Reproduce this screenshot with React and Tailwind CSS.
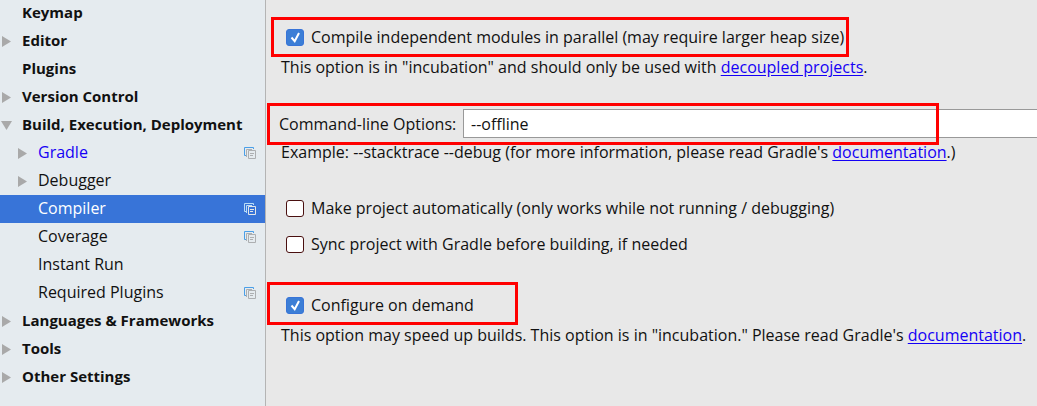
import { useState } from 'react';

const TREE = [
  { label: 'Keymap' },
  { label: 'Editor', arrow: 'closed' },
  { label: 'Plugins' },
  { label: 'Version Control', arrow: 'closed' },
  { label: 'Build, Execution, Deployment', arrow: 'open' },
  { label: 'Gradle', child: true, arrow: 'closed', project: true, modified: true },
  { label: 'Debugger', child: true, arrow: 'closed' },
  { label: 'Compiler', child: true, project: true },
  { label: 'Coverage', child: true, project: true },
  { label: 'Instant Run', child: true },
  { label: 'Required Plugins', child: true, project: true },
  { label: 'Languages & Frameworks', arrow: 'closed' },
  { label: 'Tools', arrow: 'closed' },
  { label: 'Other Settings', arrow: 'closed' },
];

function Arrow({ state }) {
  return (
    <svg viewBox="0 0 11 11" className="size-[11px] shrink-0 fill-[#a9a9a9]" aria-hidden="true">
      {state === 'open' && <path d="M0 1h11L5.5 10z" />}
      {state === 'closed' && <path d="M1 0v11L10 5.5z" />}
    </svg>
  );
}

function ProjectIcon({ selected }) {
  return (
    <svg viewBox="0 0 12 12" className="size-3 shrink-0" fill="none" aria-hidden="true">
      <path d="M9.5 2V.5h-9v8H2" stroke={selected ? '#b9dcf7' : '#4a9fe8'} />
      <path d="M2.5 10V2.5H8" stroke={selected ? '#b9dcf7' : '#adafb1'} />
      <path d="M4.5 3.5h7v8h-7z" stroke={selected ? '#e4e6e8' : '#adafb1'} />
      <path d="M6 6.5h4M6 8.5h3" stroke={selected ? '#e4e6e8' : '#adafb1'} />
    </svg>
  );
}

function TreeItem({ item, selected, onSelect }) {
  const color = selected ? 'bg-[#3874d8] text-white' : item.modified ? 'text-[#1400f5]' : 'text-[#111]';
  return (
    <li>
      <button
        type="button"
        onClick={onSelect}
        aria-current={selected ? 'page' : undefined}
        className={`flex h-7 w-full items-center gap-[10px] pr-[9px] text-left ${item.child ? 'pl-[17px]' : 'pl-px text-[15px] font-bold'} ${color}`}
      >
        <Arrow state={item.arrow} />
        <span className="grow pb-[2px] whitespace-nowrap">{item.label}</span>
        {item.project && <ProjectIcon selected={selected} />}
      </button>
    </li>
  );
}

function Check({ label, defaultChecked }) {
  return (
    <label className="flex h-6 w-fit items-center gap-[7px] whitespace-nowrap">
      <span className="grid shrink-0">
        <input
          type="checkbox"
          defaultChecked={defaultChecked}
          className="peer col-start-1 row-start-1 h-[17px] w-[18px] appearance-none rounded-[3px] border border-[#4a1010] bg-white checked:border-[#3874d8] checked:bg-[#3c7ed6]"
        />
        <svg
          viewBox="0 0 18 17"
          className="pointer-events-none invisible col-start-1 row-start-1 h-[17px] w-[18px] peer-checked:visible"
          fill="none"
          stroke="white"
          strokeWidth="2"
          aria-hidden="true"
        >
          <path d="M5.5 8.5l3.2 3.7L13 4" />
        </svg>
      </span>
      {label}
    </label>
  );
}

function Link({ children }) {
  return (
    <a href="#" className="text-[#1400f5] underline underline-offset-2">
      {children}
    </a>
  );
}

function Highlight({ className }) {
  return <div className={`pointer-events-none absolute border-3 border-[#ff0000] ${className}`} />;
}

export default function App() {
  const [selected, setSelected] = useState('Compiler');
  return (
    <div className="flex min-h-screen overflow-hidden bg-[#e8e8e8] font-['Open_Sans','Noto_Sans',sans-serif] text-base leading-6 text-[#111]">
      <nav className="w-[266px] shrink-0 border-r border-[#b4b4b4] bg-[#e5ebef]">
        <ul className="-mt-px">
          {TREE.map((item) => (
            <TreeItem
              key={item.label}
              item={item}
              selected={selected === item.label}
              onSelect={() => setSelected(item.label)}
            />
          ))}
        </ul>
      </nav>

      <main className="min-w-0 grow pt-[25px]">
        <div className="relative w-fit pl-5">
          <Check label="Compile independent modules in parallel (may require larger heap size)" defaultChecked />
          <Highlight className="-top-2 -right-[5px] -bottom-2 left-[5px]" />
        </div>
        <p className="mt-[6px] pl-[15px] whitespace-nowrap">
          This option is in "incubation" and should only be used with <Link>decoupled projects</Link>.
        </p>

        <div className="relative mt-[30px] flex items-center pl-[13px]">
          <label htmlFor="options" className="w-[184px] shrink-0 whitespace-nowrap">
            Command-line Options:
          </label>
          <input
            id="options"
            type="text"
            defaultValue="--offline"
            className="h-[29px] min-w-0 grow border border-r-0 border-[#999] bg-white px-[7px]"
          />
          <Highlight className="-top-[6px] right-[98px] -bottom-[7px] left-px" />
        </div>
        <p className="mt-[2px] pl-[15px] whitespace-nowrap">
          Example: --stacktrace --debug (for more information, please read Gradle's <Link>documentation</Link>.)
        </p>

        <div className="mt-8 flex flex-col gap-3 pl-5">
          <Check label="Make project automatically (only works while not running / debugging)" />
          <Check label="Sync project with Gradle before building, if needed" />
        </div>

        <div className="relative mt-[37px] w-fit pl-5">
          <Check label="Configure on demand" defaultChecked />
          <Highlight className="-top-[11px] -right-11 -bottom-2 left-px" />
        </div>
        <p className="mt-[6px] pl-[15px] whitespace-nowrap">
          This option may speed up builds. This option is in "incubation." Please read Gradle's <Link>documentation</Link>.
        </p>
      </main>
    </div>
  );
}
